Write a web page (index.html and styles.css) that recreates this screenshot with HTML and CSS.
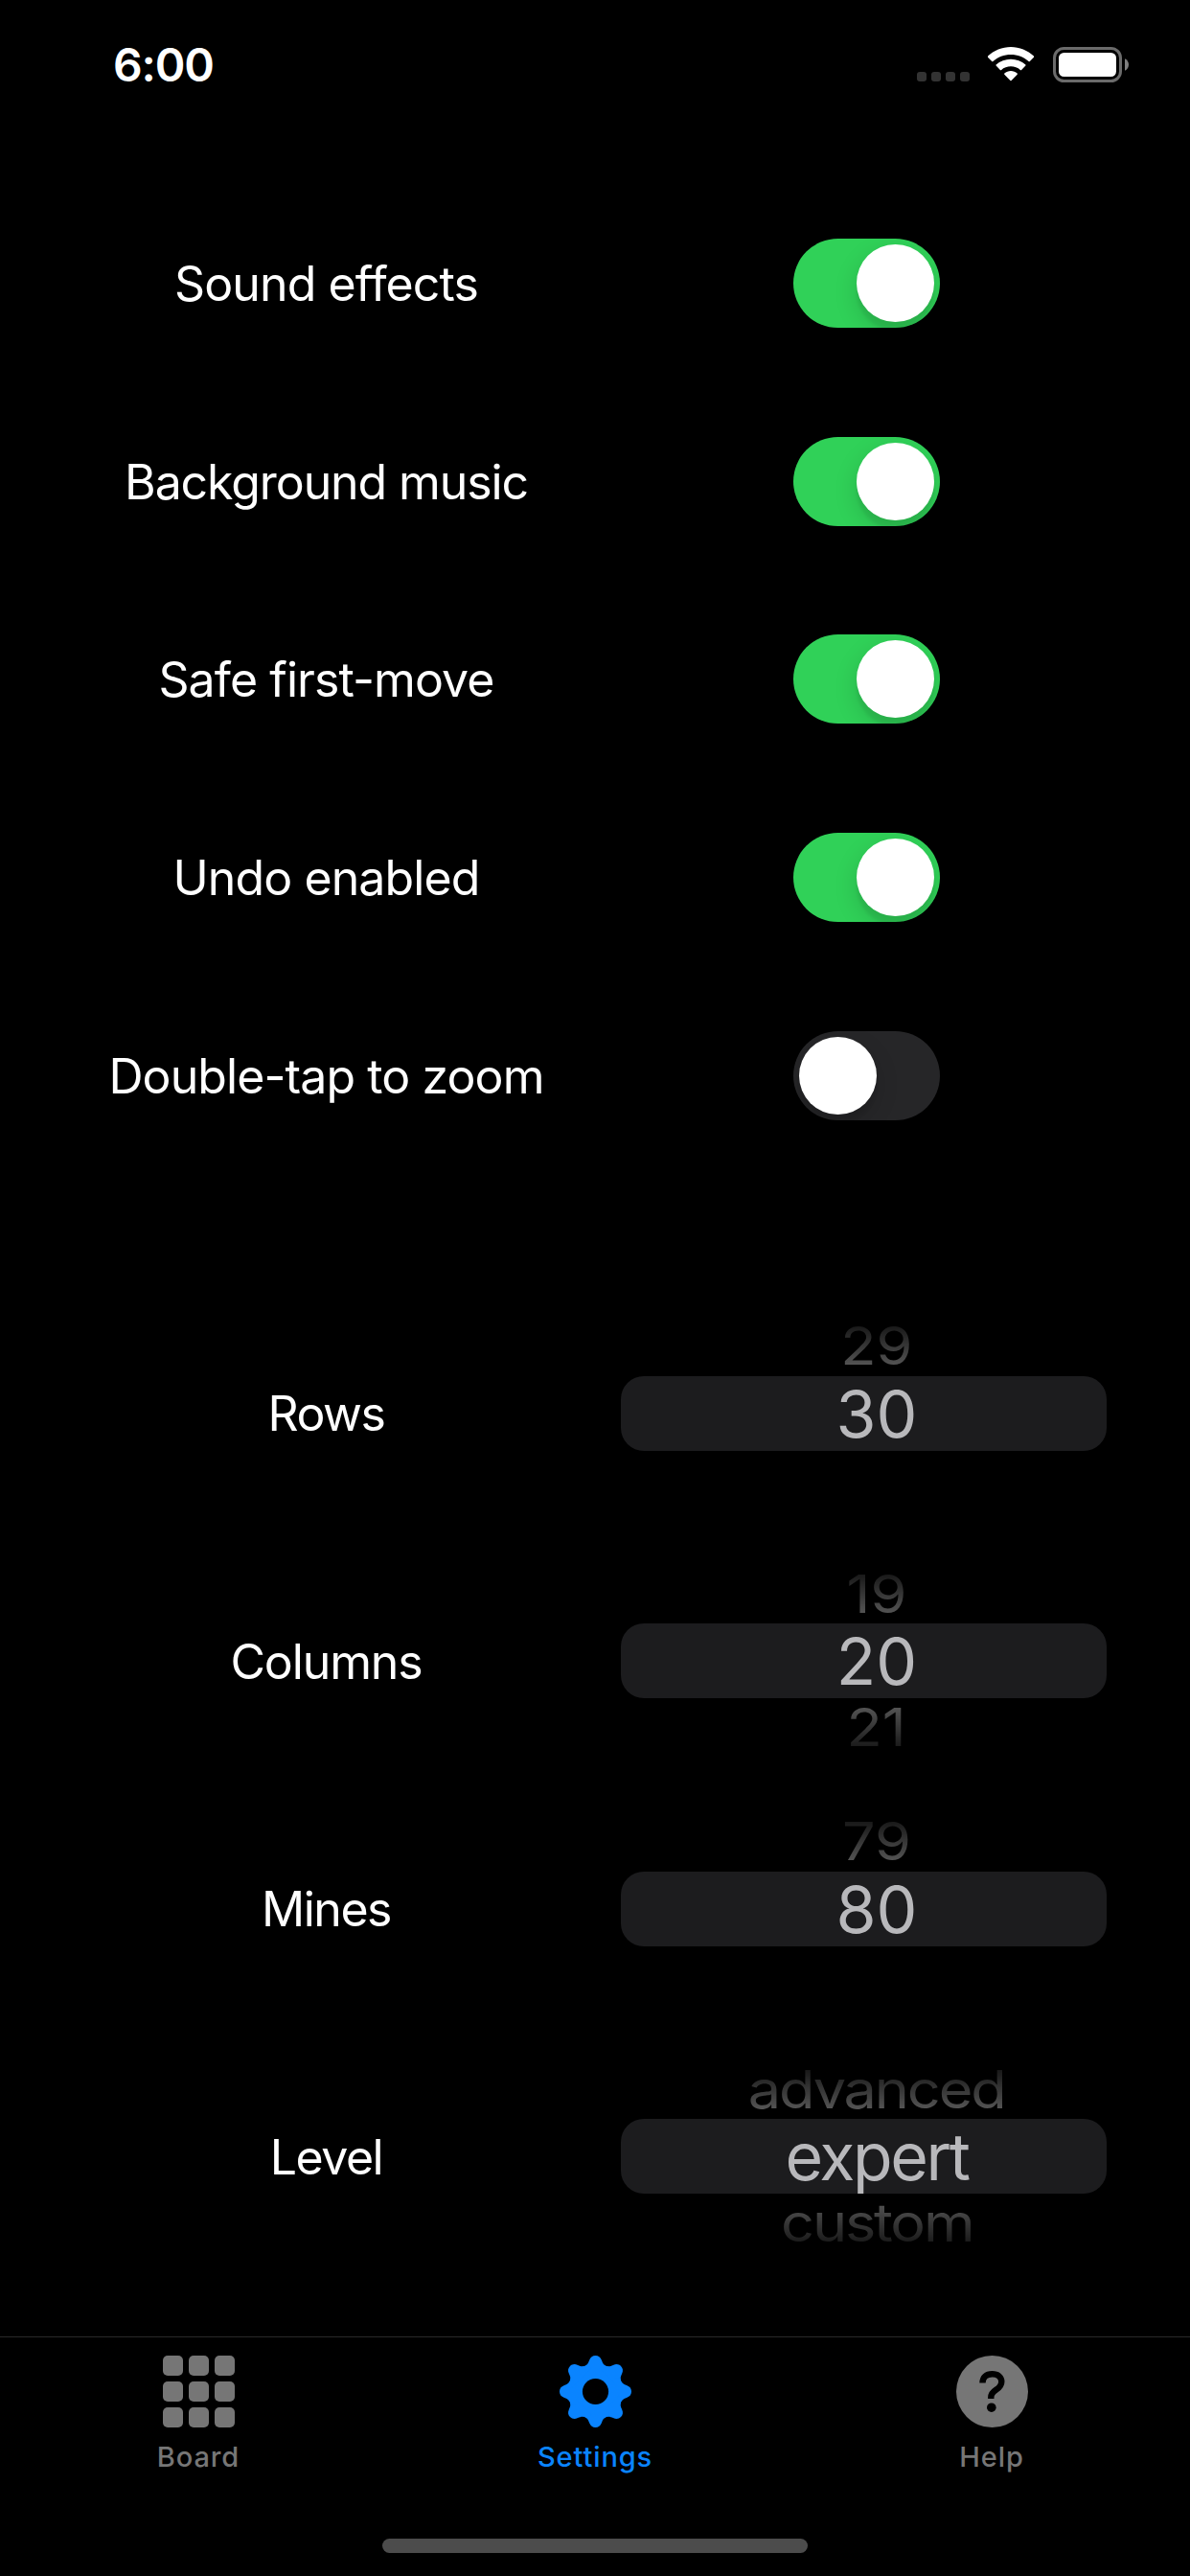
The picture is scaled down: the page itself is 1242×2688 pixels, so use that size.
FILE: index.html
```html
<!DOCTYPE html>
<html lang="en">
<head>
<meta charset="utf-8">
<title>Settings</title>
<link rel="stylesheet" href="styles.css">
</head>
<body>
<div class="screen">
  <header class="status">
    <div class="time">6:00</div>
    <div class="indicators">
      <div class="dots"><i></i><i></i><i></i><i></i></div>
      <svg class="wifi" viewBox="0 0 48 36" width="48" height="36"><path d="M24 0C15 0 6.300 3.600 0 9.600Q-.4 10.200 0 10.700L4.200 15Q4.800 15.500 5.400 15C10.500 10.400 17 7.900 24 7.900S37.500 10.400 42.600 15Q43.200 15.500 43.800 15L48 10.700Q48.400 10.200 48 9.600C41.700 3.600 33 0 24 0Z"/><path d="M24 12.700C18.300 12.700 12.800 14.800 8.600 18.600Q8.200 19.100 8.600 19.600L12.900 23.900Q13.500 24.400 14.100 23.900C16.800 21.500 20.300 20.200 24 20.200S31.200 21.500 33.900 23.900Q34.500 24.400 35.100 23.900L39.400 19.600Q39.800 19.100 39.400 18.600C35.200 14.800 29.700 12.700 24 12.700Z"/><path d="M24 25.100C21.500 25.100 19.200 26 17.300 27.600Q16.900 28.100 17.300 28.700L23.400 34.900Q24 35.500 24.600 34.900L30.700 28.700Q31.100 28.100 30.700 27.600C28.800 26 26.500 25.100 24 25.100Z"/></svg>
      <svg class="battery" viewBox="0 0 80 37" width="80" height="37"><rect x="1.500" y="1.500" width="69" height="34" rx="10" fill="none" stroke="#6b6b6b" stroke-width="3"/><rect x="6" y="6" width="60" height="25" rx="5.500" fill="#fff"/><path d="M75 12.300C77.400 13.300 79 15.700 79 18.500S77.400 23.700 75 24.800Z" fill="#808080"/></svg>
    </div>
  </header>

  <main class="settings">
    <section class="switches">
      <div class="row"><span class="label">Sound effects</span><span class="control"><span class="switch on"></span></span></div>
      <div class="row"><span class="label snug">Background music</span><span class="control"><span class="switch on"></span></span></div>
      <div class="row"><span class="label">Safe first-move</span><span class="control"><span class="switch on"></span></span></div>
      <div class="row"><span class="label">Undo enabled</span><span class="control"><span class="switch on"></span></span></div>
      <div class="row"><span class="label">Double-tap to zoom</span><span class="control"><span class="switch"></span></span></div>
    </section>
    <section class="pickers">
      <div class="row"><span class="label tight">Rows</span><div class="picker"><div class="side before"><span>29</span></div><div class="selected"><span>30</span></div><div class="side after"></div></div></div>
      <div class="row"><span class="label snug">Columns</span><div class="picker"><div class="side before"><span>19</span></div><div class="selected"><span>20</span></div><div class="side after"><span>21</span></div></div></div>
      <div class="row"><span class="label tight">Mines</span><div class="picker"><div class="side before"><span>79</span></div><div class="selected"><span>80</span></div><div class="side after"></div></div></div>
      <div class="row"><span class="label tight">Level</span><div class="picker words"><div class="side before"><span>advanced</span></div><div class="selected"><span>expert</span></div><div class="side after"><span>custom</span></div></div></div>
    </section>
  </main>

  <nav class="tabs">
    <div class="tab">
      <div class="grid-icon"><i></i><i></i><i></i><i></i><i></i><i></i><i></i><i></i><i></i></div>
      <span>Board</span>
    </div>
    <div class="tab active">
      <svg viewBox="-37.500 -37.500 75 75" width="75" height="75"><defs><path id="tooth" d="M-14 -20L-14.200 -25.800C-9 -26.500 -7.800 -29 -6.500 -32.500C-5.200 -36 -3 -37.500 0 -37.500S5.200 -36 6.500 -32.500C7.800 -29 9 -26.500 14.200 -25.800L14 -20Z"/><mask id="hub"><rect x="-38" y="-38" width="76" height="76" fill="#fff"/><circle r="13.600" fill="#000"/></mask></defs><g mask="url(#hub)" fill="currentColor"><circle r="27.500"/><use href="#tooth"/><use href="#tooth" transform="rotate(45)"/><use href="#tooth" transform="rotate(90)"/><use href="#tooth" transform="rotate(135)"/><use href="#tooth" transform="rotate(180)"/><use href="#tooth" transform="rotate(225)"/><use href="#tooth" transform="rotate(270)"/><use href="#tooth" transform="rotate(315)"/></g></svg>
      <span>Settings</span>
    </div>
    <div class="tab">
      <svg viewBox="0 0 75 75" width="75" height="75"><circle cx="37.500" cy="37.500" r="37.500" fill="currentColor"/><path d="M27.500 28.500C27.500 22.500 31.500 19.200 37.500 19.200C43.500 19.200 47.300 22.300 47.300 27.200C47.300 31.500 44.800 33.600 41.500 35.700C38 38 36.300 39.700 36.300 43.500V45" fill="none" stroke="#000" stroke-width="6.400"/><circle cx="36.800" cy="54.200" r="4.800"/></svg>
      <span>Help</span>
    </div>
  </nav>
  <div class="home"></div>
</div>
</body>
</html>
```
FILE: styles.css
```css
* { box-sizing: border-box; }
body { margin: 0; background: #000; color: #fff; font-family: Inter, "Liberation Sans", sans-serif; }
.screen { width: 1242px; height: 2688px; overflow: hidden; display: flex; flex-direction: column; }

.status { height: 145px; display: flex; justify-content: space-between; padding: 38px 63px 0 118px; }
.time { font-size: 48px; font-weight: 600; line-height: 60px; letter-spacing: -1.1px; }
.indicators { display: flex; height: 60px; padding-top: 11px; }
.dots { display: flex; gap: 5px; padding-top: 26px; margin-right: 19px; }
.dots i { width: 10px; height: 10px; border-radius: 3px; background: #333; }
.wifi { fill: #fff; margin-right: 20px; }

.switches { display: grid; grid-auto-rows: 206.7px; padding-top: 47px; }
.row { display: flex; }
.switches .row { height: 207px; }
.label { width: 683px; text-align: center; font-size: 50px; line-height: 60px; letter-spacing: -.9px; white-space: nowrap; padding: 74px 2px 0 0; }
.label.snug { letter-spacing: -1.1px; }
.label.tight { letter-spacing: -1.5px; }
.control { padding: 57px 0 0 145px; }
.switch { display: flex; width: 153px; height: 93px; padding: 6px; border-radius: 47px; background: #262628; overflow: hidden; }
.switch::before { content: ""; width: 81px; height: 81px; border-radius: 50%; background: #fff; box-shadow: 0 9px 24px rgba(0,0,0,.15), 0 9px 3px rgba(0,0,0,.06); }
.switch.on { background: #30d158; justify-content: flex-end; }

.pickers { display: grid; grid-auto-rows: 258.4px; padding-top: 120px; }
.pickers .label { width: 648px; padding: 100px 0 0 33px; height: 164px; }
.picker { width: 507px; margin-top: 39px; height: 181px; display: flex; flex-direction: column; }
.side { height: 52px; display: flex; justify-content: center; padding-left: 27px; }
.side span { font-size: 68px; line-height: 60px; color: #5c5c5c; white-space: nowrap; transform: scale(.9, .81); }
.before { -webkit-mask-image: linear-gradient(#0004, #000e 42px); mask-image: linear-gradient(#0004, #000e 42px); }
.after { -webkit-mask-image: linear-gradient(#000e 8px, #0004); mask-image: linear-gradient(#000e 8px, #0004); }
.before span { margin-top: -10px; }
.after span { margin-top: 1px; }
.selected { height: 78px; border-radius: 24px; background: #1c1c1e; color: #b8b8bb; font-size: 68px; line-height: 78px; text-align: center; padding-left: 27px; }
.words span { letter-spacing: -2.4px; }

.tabs { margin-top: auto; height: 192px; border-top: 1px solid #292929; display: grid; grid-template-columns: repeat(3, 414px); color: #767676; }
.tab { display: flex; flex-direction: column; align-items: center; padding-top: 19px; }
.tab span { font-size: 29px; font-weight: 500; line-height: 36px; margin-top: 13px; letter-spacing: .9px; }
.active { color: #0a84ff; }
.grid-icon { width: 75px; height: 75px; display: grid; grid-template-columns: repeat(3, 21px); grid-auto-rows: 21px; gap: 6px; }
.grid-icon i { border-radius: 5px; background: currentColor; }
.home { width: 444px; height: 15px; border-radius: 8px; background: #4c4c4c; margin: 19px auto 24px; flex: none; }
```
